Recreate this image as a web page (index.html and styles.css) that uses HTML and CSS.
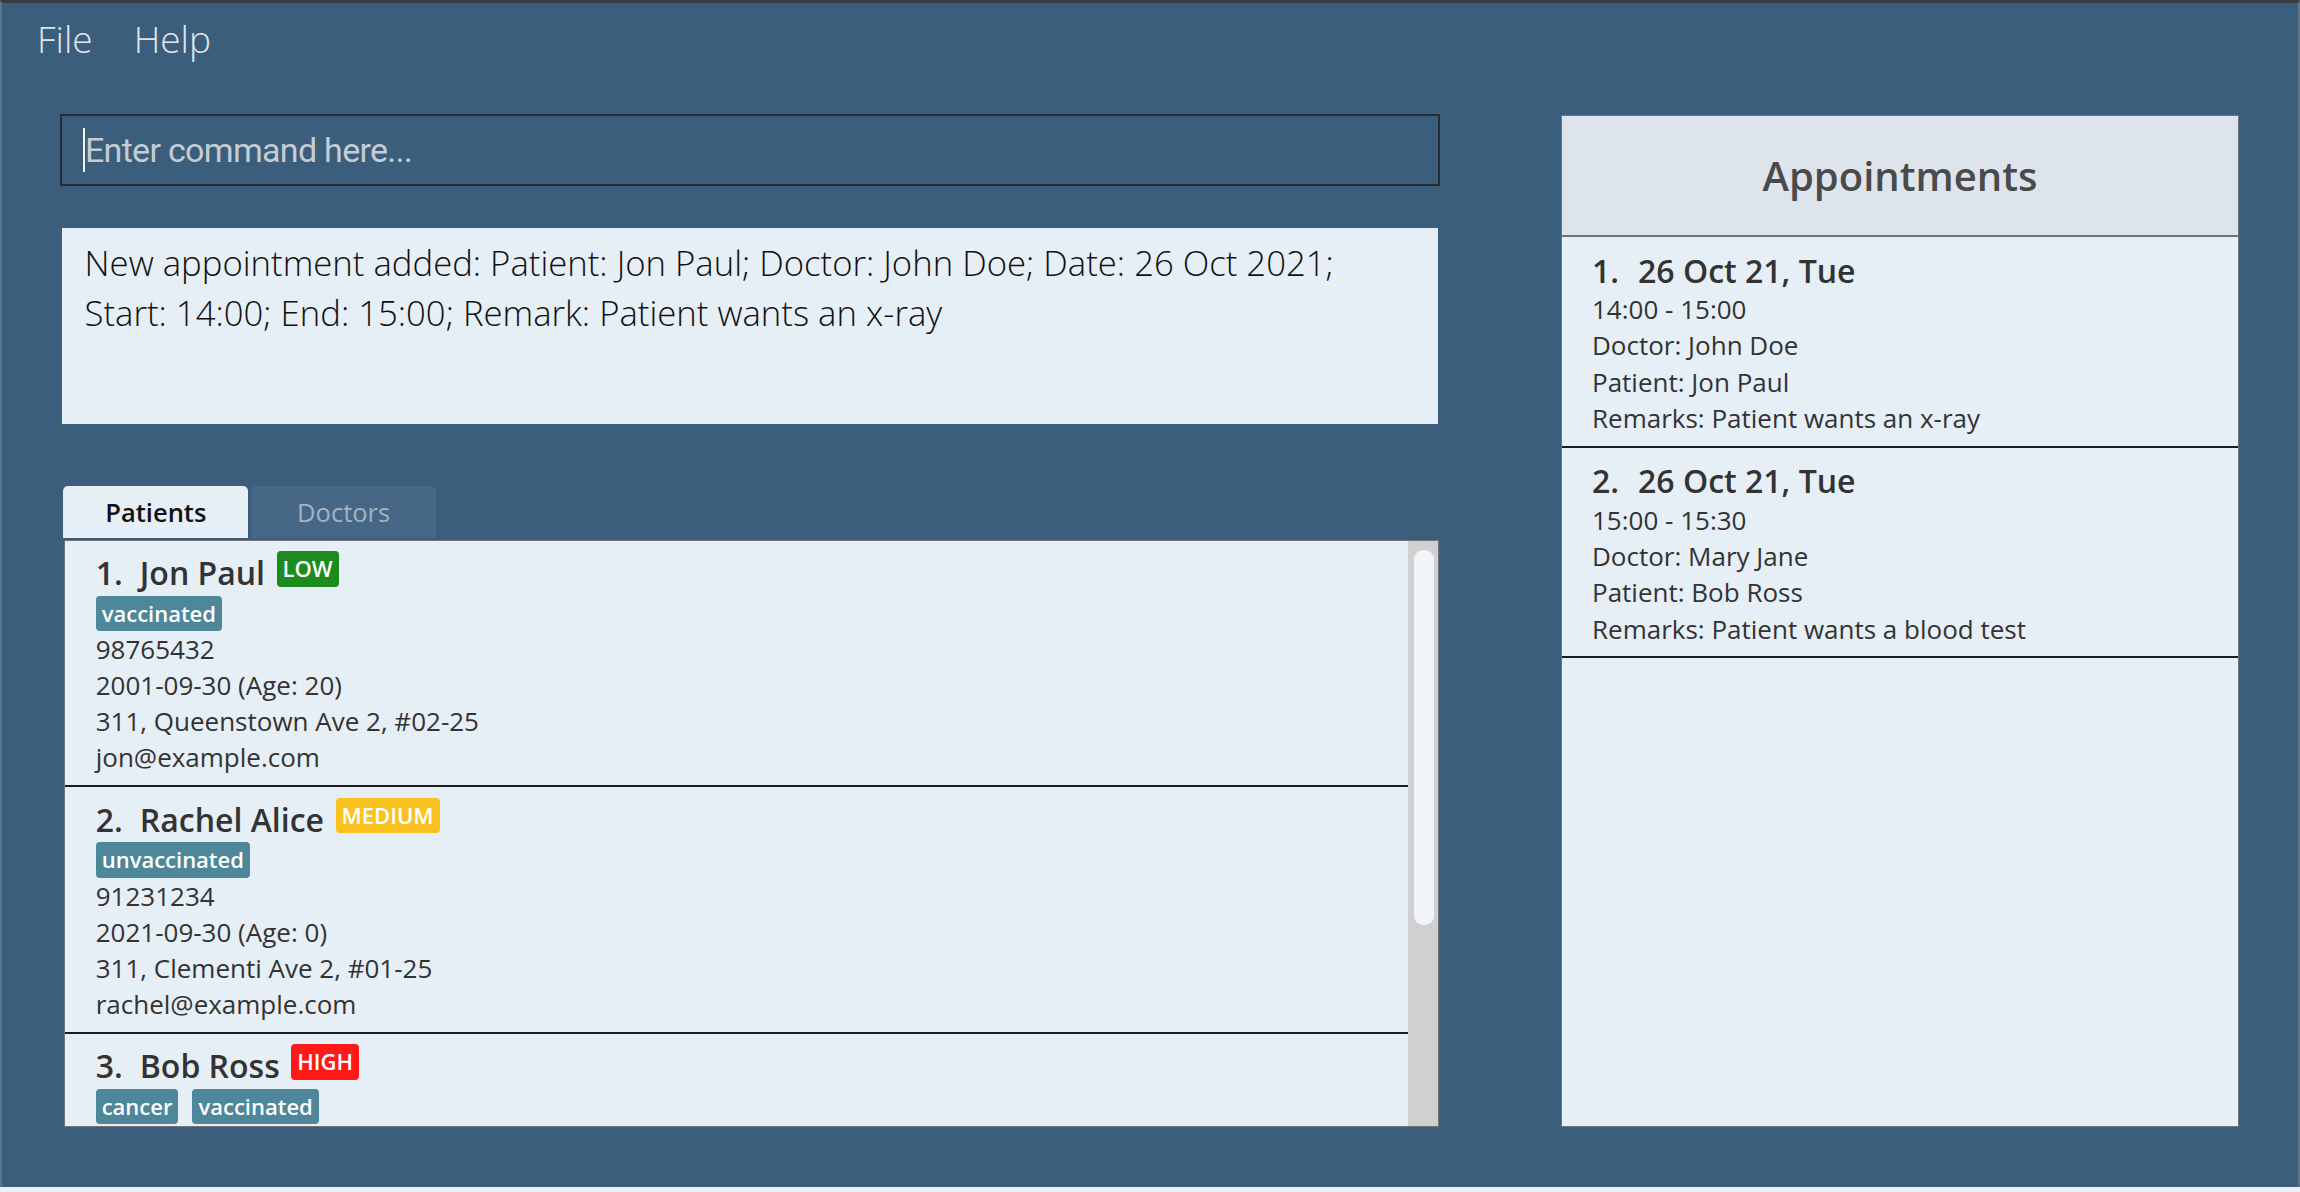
FILE: index.html
```html
<!DOCTYPE html>
<html lang="en">
<head>
<meta charset="utf-8">
<title>Appointments</title>
<link rel="stylesheet" href="styles.css">
</head>
<body>
<div class="app">
  <nav class="menubar">
    <span class="menu-item">File</span>
    <span class="menu-item">Help</span>
  </nav>
  <div class="main">
    <section class="left">
      <div class="command-box"><span class="caret"></span><span class="placeholder">Enter command here...</span></div>
      <div class="result">New appointment added: Patient: Jon Paul; Doctor: John Doe; Date: 26 Oct 2021; Start: 14:00; End: 15:00; Remark: Patient wants an x-ray</div>
      <div class="tabs">
        <div class="tab active">Patients</div>
        <div class="tab inactive">Doctors</div>
      </div>
      <div class="list-panel">
        <div class="cards">
          <div class="patient-card">
            <div class="name-row"><span class="name"><span class="idx">1.</span>Jon Paul</span><span class="badge low">LOW</span></div>
            <div class="tags"><span class="tag">vaccinated</span></div>
            <div class="detail">98765432</div>
            <div class="detail">2001-09-30 (Age: 20)</div>
            <div class="detail">311, Queenstown Ave 2, #02-25</div>
            <div class="detail">jon@example.com</div>
          </div>
          <div class="patient-card">
            <div class="name-row"><span class="name"><span class="idx">2.</span>Rachel Alice</span><span class="badge medium">MEDIUM</span></div>
            <div class="tags"><span class="tag">unvaccinated</span></div>
            <div class="detail">91231234</div>
            <div class="detail">2021-09-30 (Age: 0)</div>
            <div class="detail">311, Clementi Ave 2, #01-25</div>
            <div class="detail">rachel@example.com</div>
          </div>
          <div class="patient-card">
            <div class="name-row"><span class="name"><span class="idx">3.</span>Bob Ross</span><span class="badge high">HIGH</span></div>
            <div class="tags"><span class="tag">cancer</span><span class="tag">vaccinated</span></div>
          </div>
        </div>
        <div class="scrollbar"><div class="thumb"></div></div>
      </div>
    </section>
    <aside class="appts">
      <div class="appts-header">Appointments</div>
      <div class="appt-card">
        <div class="appt-title"><span class="idx-s">1.</span>26 Oct 21, Tue</div>
        <div class="appt-line">14:00 - 15:00</div>
        <div class="appt-line">Doctor: John Doe</div>
        <div class="appt-line">Patient: Jon Paul</div>
        <div class="appt-line">Remarks: Patient wants an x-ray</div>
      </div>
      <div class="appt-card">
        <div class="appt-title"><span class="idx-s">2.</span>26 Oct 21, Tue</div>
        <div class="appt-line">15:00 - 15:30</div>
        <div class="appt-line">Doctor: Mary Jane</div>
        <div class="appt-line">Patient: Bob Ross</div>
        <div class="appt-line">Remarks: Patient wants a blood test</div>
      </div>
    </aside>
  </div>
</div>
</body>
</html>
```
FILE: styles.css
```css
* { box-sizing: border-box; }
html, body { margin: 0; }
body {
  background: #eef2f6;
  font-family: "Open Sans", sans-serif;
}
.app {
  height: 1187px;
  background: #3b5e7c;
  border-top: 3px solid #3a3d40;
  border-left: 2px solid #5d7489;
  border-right: 2px solid #5d7489;
  display: flex;
  flex-direction: column;
}
.menubar {
  height: 111px;
  display: flex;
  gap: 41px;
  padding: 10px 0 0 35px;
}
.menu-item {
  font-weight: 300;
  font-size: 37px;
  line-height: normal;
  color: #e2e5e8;
}
.main {
  display: flex;
  padding-left: 58px;
  gap: 121px;
}
.left {
  width: 1380px;
  display: flex;
  flex-direction: column;
}
.command-box {
  height: 72px;
  border: 2px solid #262d33;
  display: flex;
  align-items: center;
  padding-left: 21px;
}
.caret {
  width: 2px;
  height: 44px;
  background: #f2f2f2;
}
.placeholder {
  font-family: Roboto, sans-serif;
  font-size: 34px;
  letter-spacing: -0.7px;
  color: #c5ccd3;
}
.result {
  margin: 41.7px 2px 0;
  height: 196px;
  background: #e6eef6;
  padding: 10px 90px 0 22.6px;
  font-weight: 300;
  font-size: 34.7px;
  line-height: 50px;
  color: #111;
}
.tabs {
  margin: 62px 0 0 3.2px;
  display: flex;
  gap: 2.5px;
}
.tab {
  width: 185.3px;
  height: 52px;
  border-radius: 5px 5px 0 0;
  display: flex;
  align-items: center;
  justify-content: center;
  font-size: 25.5px;
}
.tab.active { background: #e6eef6; color: #111; font-weight: 600; }
.tab.inactive { background: #466886; color: #a3b3c2; }
.list-panel {
  margin: 2px 0.8px 0 3.7px;
  height: 587px;
  border: 1px solid #6f7478;
  background: #e6eef6;
  display: flex;
}
.cards { flex: 1; overflow: hidden; }
.patient-card {
  padding: 10.5px 0 10px 31px;
  border-bottom: 2px solid #1c1d1f;
}
.name-row { display: flex; align-items: flex-start; gap: 11.6px; }
.name {
  font-weight: 600;
  font-size: 32px;
  line-height: 43.6px;
  color: #333;
}
.idx { margin-right: 17px; }
.badge, .tag {
  height: 35.4px;
  padding: 0 6px;
  border-radius: 4px;
  color: #fff;
  font-weight: 600;
  font-size: 22px;
  line-height: 35px;
}
.badge.low { background: #1e8b1e; }
.badge.medium { background: #fbc120; }
.badge.high { background: #ff1a1a; }
.tags { display: flex; gap: 14px; margin-top: 1px; }
.tag { background: #4d8799; }
.detail {
  font-size: 26px;
  line-height: 36px;
  color: #333;
}
.scrollbar {
  width: 30px;
  background: #d0d0d0;
  padding: 9.3px 4px 0 6px;
}
.thumb {
  height: 375px;
  background: #f1f4f8;
  border-radius: 9px;
}
.appts {
  width: 678px;
  margin-top: 1px;
  height: 1012px;
  border: 1px solid #6f7478;
  background: #e6eef6;
}
.appts-header {
  height: 121px;
  background: #dde4ec;
  border-bottom: 2px solid #6e7378;
  display: flex;
  align-items: center;
  justify-content: center;
  font-size: 40px;
  font-weight: 600;
  color: #4a4a4a;
}
.appt-card {
  padding: 12.5px 0 9.5px 30px;
  border-bottom: 2px solid #1c1d1f;
}
.appt-title {
  font-size: 32px;
  font-weight: 600;
  line-height: 41.5px;
  color: #333;
}
.idx-s { margin-right: 19px; }
.appt-line {
  font-size: 26px;
  line-height: 36.3px;
  color: #333;
}
```
